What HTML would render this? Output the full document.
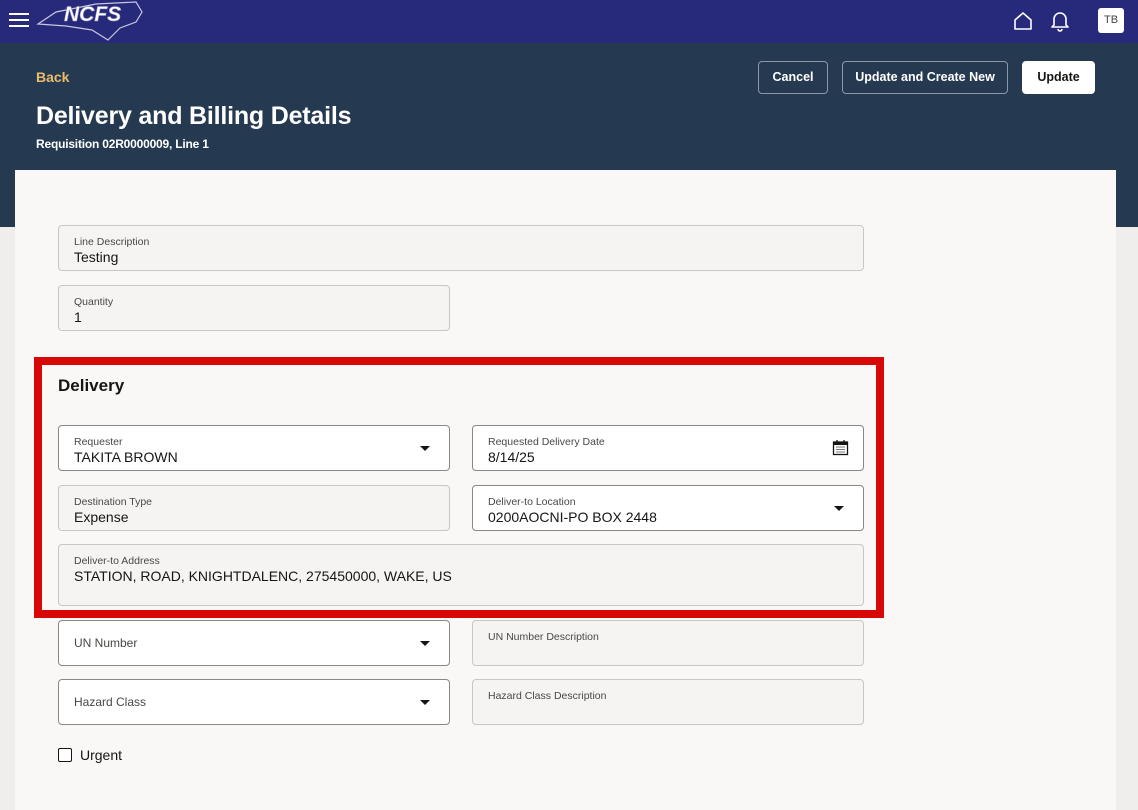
<!DOCTYPE html>
<html><head><style>
*{box-sizing:border-box;margin:0;padding:0}
body{width:1138px;height:787px;overflow:hidden;background:#efeeec;font-family:"Liberation Sans",sans-serif;position:relative;color:#161513}
.top{position:absolute;left:0;top:0;width:1138px;height:43px;background:#27297a}
.hdr{position:absolute;left:0;top:43px;width:1138px;height:184px;background:#253a50}
.card{position:absolute;left:15px;top:170px;width:1101px;height:640px;background:#f9f8f6}
.a{position:absolute}
.btn{position:absolute;top:61px;height:33px;border:1px solid #8b98a6;border-radius:4px;color:#fff;font-weight:bold;font-size:12.5px;text-align:center;line-height:31px}
.f{position:absolute;border:1px solid #c9c7c3;border-radius:4px;background:#f5f4f2}
.f.w{background:#fff;border-color:#8a8784}
.f .l{position:absolute;left:15px;top:10px;font-size:10.5px;color:#4a4745}
.f .v{position:absolute;left:15px;top:23px;font-size:14px;color:#161513}
.f .p{position:absolute;left:15px;top:15px;font-size:12px;color:#4a4745}
.dd{position:absolute;right:19px;top:20px;width:0;height:0;border-left:5px solid transparent;border-right:5px solid transparent;border-top:5px solid #161513}
</style></head><body>
<div class="top"></div>
<div class="hdr"></div>
<div class="a" style="left:9px;top:13px;width:20px;height:2px;background:#fff;box-shadow:0 6px 0 #fff,0 12px 0 #fff"></div>
<svg class="a" style="left:36px;top:0" width="108" height="42"><path d="M2 24 L20 12 L60 4 L100 2 L106 12 L100 22 L84 28 L72 40 L56 30 L30 26 Z" fill="none" stroke="#c8c8e0" stroke-width="1.2"/><text x="28" y="21" font-family="Liberation Sans" font-weight="bold" font-style="italic" font-size="21" fill="#fff" stroke="#9b9bc8" stroke-width="0.6">NCFS</text></svg>
<svg class="a" style="left:1013px;top:11px" width="20" height="20"><path d="M2 9 L10 2 L18 9 L18 18 L2 18 Z" fill="none" stroke="#fff" stroke-width="1.6" stroke-linejoin="round"/></svg>
<svg class="a" style="left:1050px;top:10px" width="20" height="22"><path d="M4 15 L4 9 A6 6 0 0 1 16 9 L16 15 L18 17 L2 17 Z" fill="none" stroke="#fff" stroke-width="1.6" stroke-linejoin="round"/><path d="M8 19 A2 2 0 0 0 12 19" fill="none" stroke="#fff" stroke-width="1.6"/></svg>
<div class="a" style="left:1098px;top:8px;width:26px;height:25px;background:#fff;border-radius:3px;font-size:11px;color:#444;text-align:center;line-height:25px">TB</div>
<div class="a" style="left:36px;top:69px;color:#e8bc6a;font-weight:bold;font-size:14px">Back</div>
<div class="a" style="left:36px;top:102px;color:#fff;font-weight:bold;font-size:25px;letter-spacing:-0.2px">Delivery and Billing Details</div>
<div class="a" style="left:36px;top:137px;color:#fff;font-weight:bold;font-size:12px;letter-spacing:-0.2px">Requisition 02R0000009, Line 1</div>
<div class="btn" style="left:758px;width:70px">Cancel</div>
<div class="btn" style="left:842px;width:166px">Update and Create New</div>
<div class="btn" style="left:1022px;width:73px;background:#fff;color:#161513;border-color:#fff">Update</div>
<div class="card"></div>
<div class="f" style="left:58px;top:225px;width:806px;height:46px"><div class="l">Line Description</div><div class="v">Testing</div></div>
<div class="f" style="left:58px;top:285px;width:392px;height:46px"><div class="l">Quantity</div><div class="v">1</div></div>
<div class="a" style="left:34px;top:357px;width:850px;height:261px;border:8px solid #d80808"></div>
<div class="a" style="left:58px;top:376px;font-size:17px;font-weight:bold">Delivery</div>
<div class="f w" style="left:58px;top:425px;width:392px;height:46px"><div class="l">Requester</div><div class="v">TAKITA BROWN</div><div class="dd"></div></div>
<div class="f w" style="left:472px;top:425px;width:392px;height:46px"><div class="l">Requested Delivery Date</div><div class="v">8/14/25</div>
<svg class="a" style="right:14px;top:13px" width="17" height="17"><rect x="1.5" y="3" width="14" height="12.5" fill="none" stroke="#161513" stroke-width="1.3"/><rect x="1.5" y="3" width="14" height="3" fill="#161513"/><path d="M5 1 V4 M12 1 V4" stroke="#161513" stroke-width="1.3"/><path d="M4 8 H13 M4 10.5 H13 M4 13 H13" stroke="#777" stroke-width="1"/></svg></div>
<div class="f" style="left:58px;top:485px;width:392px;height:46px"><div class="l">Destination Type</div><div class="v">Expense</div></div>
<div class="f w" style="left:472px;top:485px;width:392px;height:46px"><div class="l">Deliver-to Location</div><div class="v">0200AOCNI-PO BOX 2448</div><div class="dd"></div></div>
<div class="f" style="left:58px;top:544px;width:806px;height:62px"><div class="l">Deliver-to Address</div><div class="v">STATION, ROAD, KNIGHTDALENC, 275450000, WAKE, US</div></div>
<div class="f w" style="left:58px;top:620px;width:392px;height:46px"><div class="p">UN Number</div><div class="dd"></div></div>
<div class="f" style="left:472px;top:620px;width:392px;height:46px"><div class="l">UN Number Description</div></div>
<div class="f w" style="left:58px;top:679px;width:392px;height:46px"><div class="p">Hazard Class</div><div class="dd"></div></div>
<div class="f" style="left:472px;top:679px;width:392px;height:46px"><div class="l">Hazard Class Description</div></div>
<div class="a" style="left:58px;top:748px;width:14px;height:14px;border:1.5px solid #161513;border-radius:2px;background:#fff"></div>
<div class="a" style="left:80px;top:747px;font-size:14px">Urgent</div>
</body></html>
